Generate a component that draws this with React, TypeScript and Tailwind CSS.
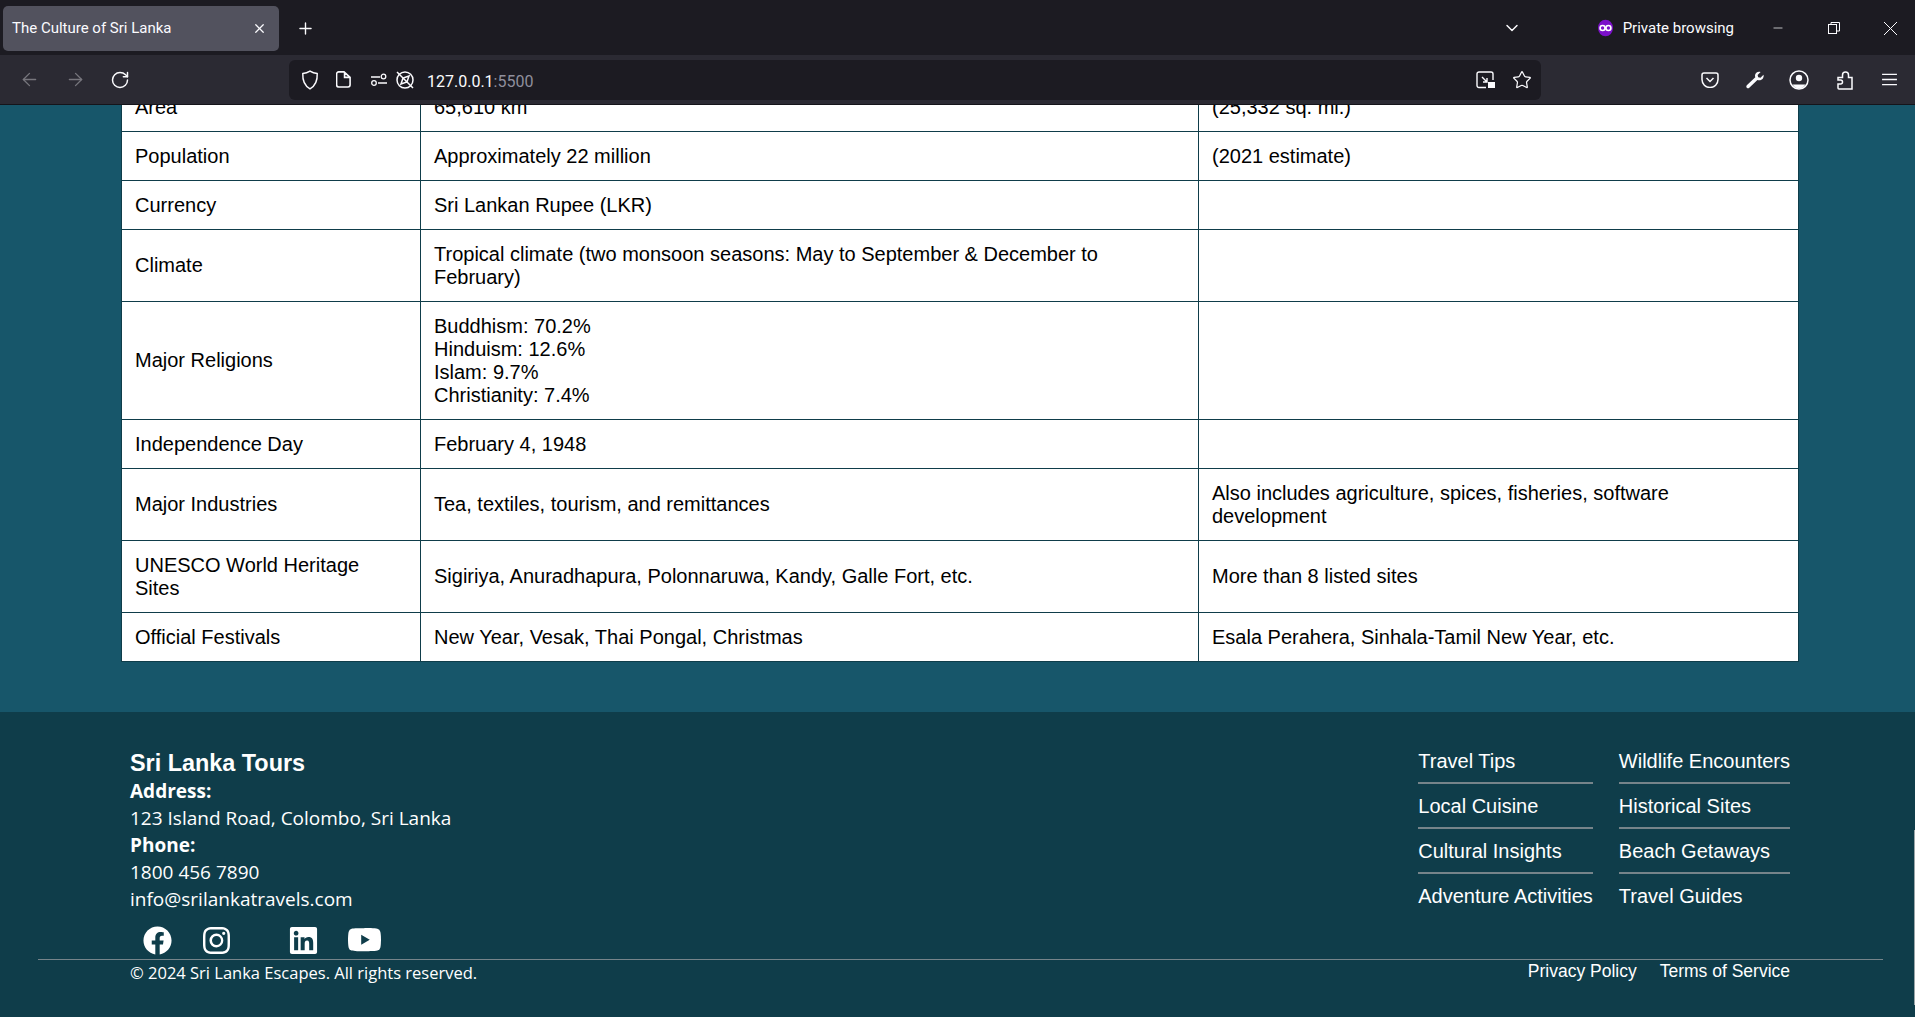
import { ArrowLeft, ArrowRight, ChevronDown, Minus, Plus, RotateCw, Star, X } from 'lucide-react';
import { BsInstagram, BsYoutube } from 'react-icons/bs';
import { FaFacebook, FaLinkedin } from 'react-icons/fa';

const rows: [string, React.ReactNode, React.ReactNode][] = [
  [
    'Area',
    <>
      65,610 km<sup className="leading-none -top-[0.8em]">2</sup>
    </>,
    '(25,332 sq. mi.)',
  ],
  ['Population', 'Approximately 22 million', '(2021 estimate)'],
  ['Currency', 'Sri Lankan Rupee (LKR)', ''],
  ['Climate', 'Tropical climate (two monsoon seasons: May to September & December to February)', ''],
  [
    'Major Religions',
    <>
      Buddhism: 70.2%
      <br />
      Hinduism: 12.6%
      <br />
      Islam: 9.7%
      <br />
      Christianity: 7.4%
    </>,
    '',
  ],
  ['Independence Day', 'February 4, 1948', ''],
  ['Major Industries', 'Tea, textiles, tourism, and remittances', 'Also includes agriculture, spices, fisheries, software development'],
  ['UNESCO World Heritage Sites', 'Sigiriya, Anuradhapura, Polonnaruwa, Kandy, Galle Fort, etc.', 'More than 8 listed sites'],
  ['Official Festivals', 'New Year, Vesak, Thai Pongal, Christmas', 'Esala Perahera, Sinhala-Tamil New Year, etc.'],
];

const linksLeft = ['Travel Tips', 'Local Cuisine', 'Cultural Insights', 'Adventure Activities'];
const linksRight = ['Wildlife Encounters', 'Historical Sites', 'Beach Getaways', 'Travel Guides'];

const TabBar = () => (
  <div className="h-[55px] pt-[1px] bg-[#1c1b22] flex items-center text-[#fbfbfe] font-['Roboto',sans-serif]">
    <div className="ml-[3px] w-[276px] h-[45px] rounded-[5px] bg-[#52525e] flex items-center justify-between pl-[9px] pr-[12px]">
      <span className="text-[15px] pt-[1px]">The Culture of Sri Lanka</span>
      <X className="w-[15px] h-[15px]" strokeWidth={2} />
    </div>
    <Plus className="ml-[17px] w-[19px] h-[19px]" strokeWidth={1.75} />
    <div className="flex-1" />
    <ChevronDown className="w-[20px] h-[20px] mr-[76px]" strokeWidth={1.75} />
    <div className="flex items-center gap-[10px] mr-[37px]">
      <svg viewBox="0 0 18 20" className="w-[15px] h-[20px]">
        <ellipse cx="9" cy="10" rx="9" ry="10" fill="#7b10c9" />
        <circle cx="5.5" cy="10" r="3" fill="none" stroke="#fff" strokeWidth="2" />
        <circle cx="12.5" cy="10" r="3" fill="none" stroke="#fff" strokeWidth="2" />
      </svg>
      <span className="text-[15px]">Private browsing</span>
    </div>
    <Minus className="w-[14px] h-[14px] mr-[43px]" strokeWidth={1.25} />
    <svg viewBox="0 0 12 12" className="w-[12px] h-[12px] mr-[44px]" fill="none" stroke="#fbfbfe" strokeWidth="1">
      <rect x="0.5" y="2.5" width="8" height="9" />
      <path d="M3 2.5V.5h8.500v8.500H8.500" />
    </svg>
    <svg viewBox="0 0 13 13" className="w-[13px] h-[13px] mr-[18px]" fill="none" stroke="#fbfbfe" strokeWidth="1">
      <path d="M0 0l13 13M13 0L0 13" />
    </svg>
  </div>
);

const ToolBar = () => (
  <div className="h-[50px] bg-[#2b2a33] flex items-center border-b border-[#15141a] text-[#fbfbfe]">
    <ArrowLeft className="ml-[19px] w-[21px] h-[21px] text-[#77767d]" strokeWidth={1.5} />
    <ArrowRight className="ml-[25px] w-[21px] h-[21px] text-[#77767d]" strokeWidth={1.5} />
    <RotateCw className="ml-[24px] w-[20px] h-[20px]" strokeWidth={1.75} />
    <div className="ml-[159px] w-[1252px] h-[40px] rounded-[6px] bg-[#1c1b22] flex items-center">
      <svg viewBox="0 0 16 18" className="ml-[12px] w-[18px] h-[20px]" fill="none" stroke="#fbfbfe" strokeWidth="1.300">
        <path d="M8 1c2 1.300 4 2 6.500 2.200C14.800 9.500 12.500 14.500 8 17 3.500 14.500 1.200 9.500 1.500 3.200 4 3 6 2.300 8 1z" />
      </svg>
      <svg viewBox="0 0 14 16" className="ml-[17px] w-[15px] h-[17px]" fill="none" stroke="#fbfbfe" strokeWidth="1.500">
        <path d="M2.500.8h5l5.700 5.200v7a2 2 0 0 1-2 2h-8.700a2 2 0 0 1-2-2V2.800a2 2 0 0 1 2-2zM8 1v5h5" />
      </svg>
      <svg viewBox="0 0 18 14" className="ml-[19px] w-[18px] h-[14px]" fill="none" stroke="#fbfbfe" strokeWidth="1.300">
        <path d="M1 4h9M8 10h9" />
        <circle cx="13.500" cy="3.500" r="2.300" />
        <circle cx="4" cy="10" r="2.300" />
      </svg>
      <svg viewBox="0 0 20 20" className="ml-[7px] w-[20px] h-[20px]" fill="none" stroke="#fbfbfe" strokeWidth="1.500">
        <circle cx="10" cy="10" r="8" />
        <path d="M2 2l16 16M6 14l2-6 6-2-2 6z" />
      </svg>
      <span className="ml-[12px] pt-[5px] text-[16px] font-['Roboto',sans-serif]">
        127.0.0.1<span className="text-[#8f8f9d]">:5500</span>
      </span>
      <div className="flex-1" />
      <svg viewBox="0 0 20 18" className="w-[20px] h-[18px]" fill="none" stroke="#fbfbfe" strokeWidth="1.400">
        <path d="M10 16.500H3a2 2 0 0 1-2-2V3a2 2 0 0 1 2-2h12a2 2 0 0 1 2 2v6" />
        <path d="M6 6l5 5M11 7v4H7" />
        <rect x="12" y="11" width="7" height="6" fill="#fbfbfe" stroke="none" />
      </svg>
      <Star className="ml-[16px] mr-[9px] w-[20px] h-[20px]" strokeWidth={1.5} />
    </div>
    <svg viewBox="0 0 18 16" className="ml-[160px] w-[18px] h-[16px]" fill="none" stroke="#fbfbfe" strokeWidth="1.500">
      <path d="M3 1h12a2 2 0 0 1 2 2v4.500a8 8 0 0 1-16 0V3a2 2 0 0 1 2-2z" />
      <path d="M5.500 6L9 9.500 12.500 6" />
    </svg>
    <svg viewBox="0 0 18 18" className="ml-[27px] w-[18px] h-[18px]" fill="#fbfbfe">
      <path d="M17.500 3.800l-3 3-2.300-.5-.6-2.300 3-3c-2.300-1-5.500.4-5.600 3.400 0 .7.100 1.300.3 1.800L.8 14.300c-.7.800-.6 1.900 0 2.500.7.700 1.800.7 2.500 0L11.400 9c2 .8 4.300.2 5.500-1.500.7-1 .9-2.500.6-3.700z" />
    </svg>
    <svg viewBox="0 0 20 20" className="ml-[25px] w-[20px] h-[20px]" fill="none" stroke="#fbfbfe" strokeWidth="1.500">
      <circle cx="10" cy="10" r="9" />
      <circle cx="10" cy="8" r="3.200" fill="#fbfbfe" stroke="none" />
      <path d="M3.500 14.500h13C15 17 12.500 18.500 10 18.500S5 17 3.500 14.500z" fill="#fbfbfe" stroke="none" />
    </svg>
    <svg viewBox="0 0 16 20" className="ml-[28px] w-[16px] h-[20px]" fill="none" stroke="#fbfbfe" strokeWidth="1.500">
      <path d="M1 18v-4h2.500a2 2 0 0 0 0-4H1V7.500h4.500V5a3 3 0 0 1 6 0v2.500H15V19H2a1 1 0 0 1-1-1z" />
    </svg>
    <svg viewBox="0 0 16 14" className="ml-[29px] w-[15px] h-[13px]" fill="none" stroke="#fbfbfe" strokeWidth="1.500">
      <path d="M0 1.500h16M0 7h16M0 12.500h16" />
    </svg>
  </div>
);

const InfoTable = () => (
  <div className="bg-[#17566a] pt-0 pb-[50px] pl-[121px] pr-[117px] -mt-[23px]">
    <table className="w-[1677px] table-fixed border-collapse bg-white text-black font-['Liberation_Sans',sans-serif] text-[20px] leading-[23px]">
      <colgroup>
        <col className="w-[299px]" />
        <col className="w-[778px]" />
        <col className="w-[600px]" />
      </colgroup>
      <tbody>
        {rows.map(([name, value, note]) => (
          <tr key={name}>
            <td className="border border-[#0f3d4a] px-[13px] py-[12.5px] align-middle">{name}</td>
            <td className="border border-[#0f3d4a] px-[13px] py-[12.5px] align-middle">{value}</td>
            <td className="border border-[#0f3d4a] px-[13px] py-[12.5px] align-middle">{note}</td>
          </tr>
        ))}
      </tbody>
    </table>
  </div>
);

const LinkColumn = ({ links }: { links: string[] }) => (
  <ul>
    {links.map((link, i) => (
      <li
        key={link}
        className={`h-[45px] pt-[11px] leading-[23px] ${i < links.length - 1 ? 'border-b-[2px] border-[#76848a]' : ''}`}
      >
        {link}
      </li>
    ))}
  </ul>
);

const Footer = () => (
  <footer className="relative h-[305px] bg-[#0f3d4a] text-white">
    <div className="flex justify-between pl-[130px] pr-[125px] pt-[37px] h-[247px]">
      <div className="font-['Open_Sans',sans-serif] text-[19px] leading-[27px]">
        <h3 className="font-['Liberation_Sans',sans-serif] font-bold text-[23.4px] leading-[29px]">Sri Lanka Tours</h3>
        <p className="font-bold">Address:</p>
        <p>123 Island Road, Colombo, Sri Lanka</p>
        <p className="font-bold">Phone:</p>
        <p>1800 456 7890</p>
        <p>info@srilankatravels.com</p>
        <div className="flex items-center mt-[11px] pl-[13px]">
          <FaFacebook className="w-[29px] h-[29px]" />
          <BsInstagram className="ml-[31px] w-[27px] h-[27px]" />
          <FaLinkedin className="ml-[58px] w-[31px] h-[31px]" />
          <BsYoutube className="ml-[29px] w-[33px] h-[33px]" />
        </div>
      </div>
      <div className="flex gap-[26px] -mt-[10px] h-fit font-['Liberation_Sans',sans-serif] text-[20px]">
        <LinkColumn links={linksLeft} />
        <LinkColumn links={linksRight} />
      </div>
    </div>
    <div className="ml-[38px] mr-[32px] border-t-[1.5px] border-[#76848a]" />
    <div className="flex justify-between pl-[130px] pr-[125px] pt-[1px]">
      <span className="font-['Open_Sans',sans-serif] text-[16.5px] leading-[24px]">© 2024 Sri Lanka Escapes. All rights reserved.</span>
      <div className="flex gap-[23px] font-['Liberation_Sans',sans-serif] text-[17.5px] leading-[21px]">
        <span>Privacy Policy</span>
        <span>Terms of Service</span>
      </div>
    </div>
    <div className="absolute right-0 top-[118px] w-[1px] h-[175px] bg-[#9aa5a8]" />
  </footer>
);

export default function App() {
  return (
    <div className="h-[1017px] w-[1915px] overflow-hidden flex flex-col">
      <div className="relative z-10">
        <TabBar />
        <ToolBar />
      </div>
      <InfoTable />
      <Footer />
    </div>
  );
}
